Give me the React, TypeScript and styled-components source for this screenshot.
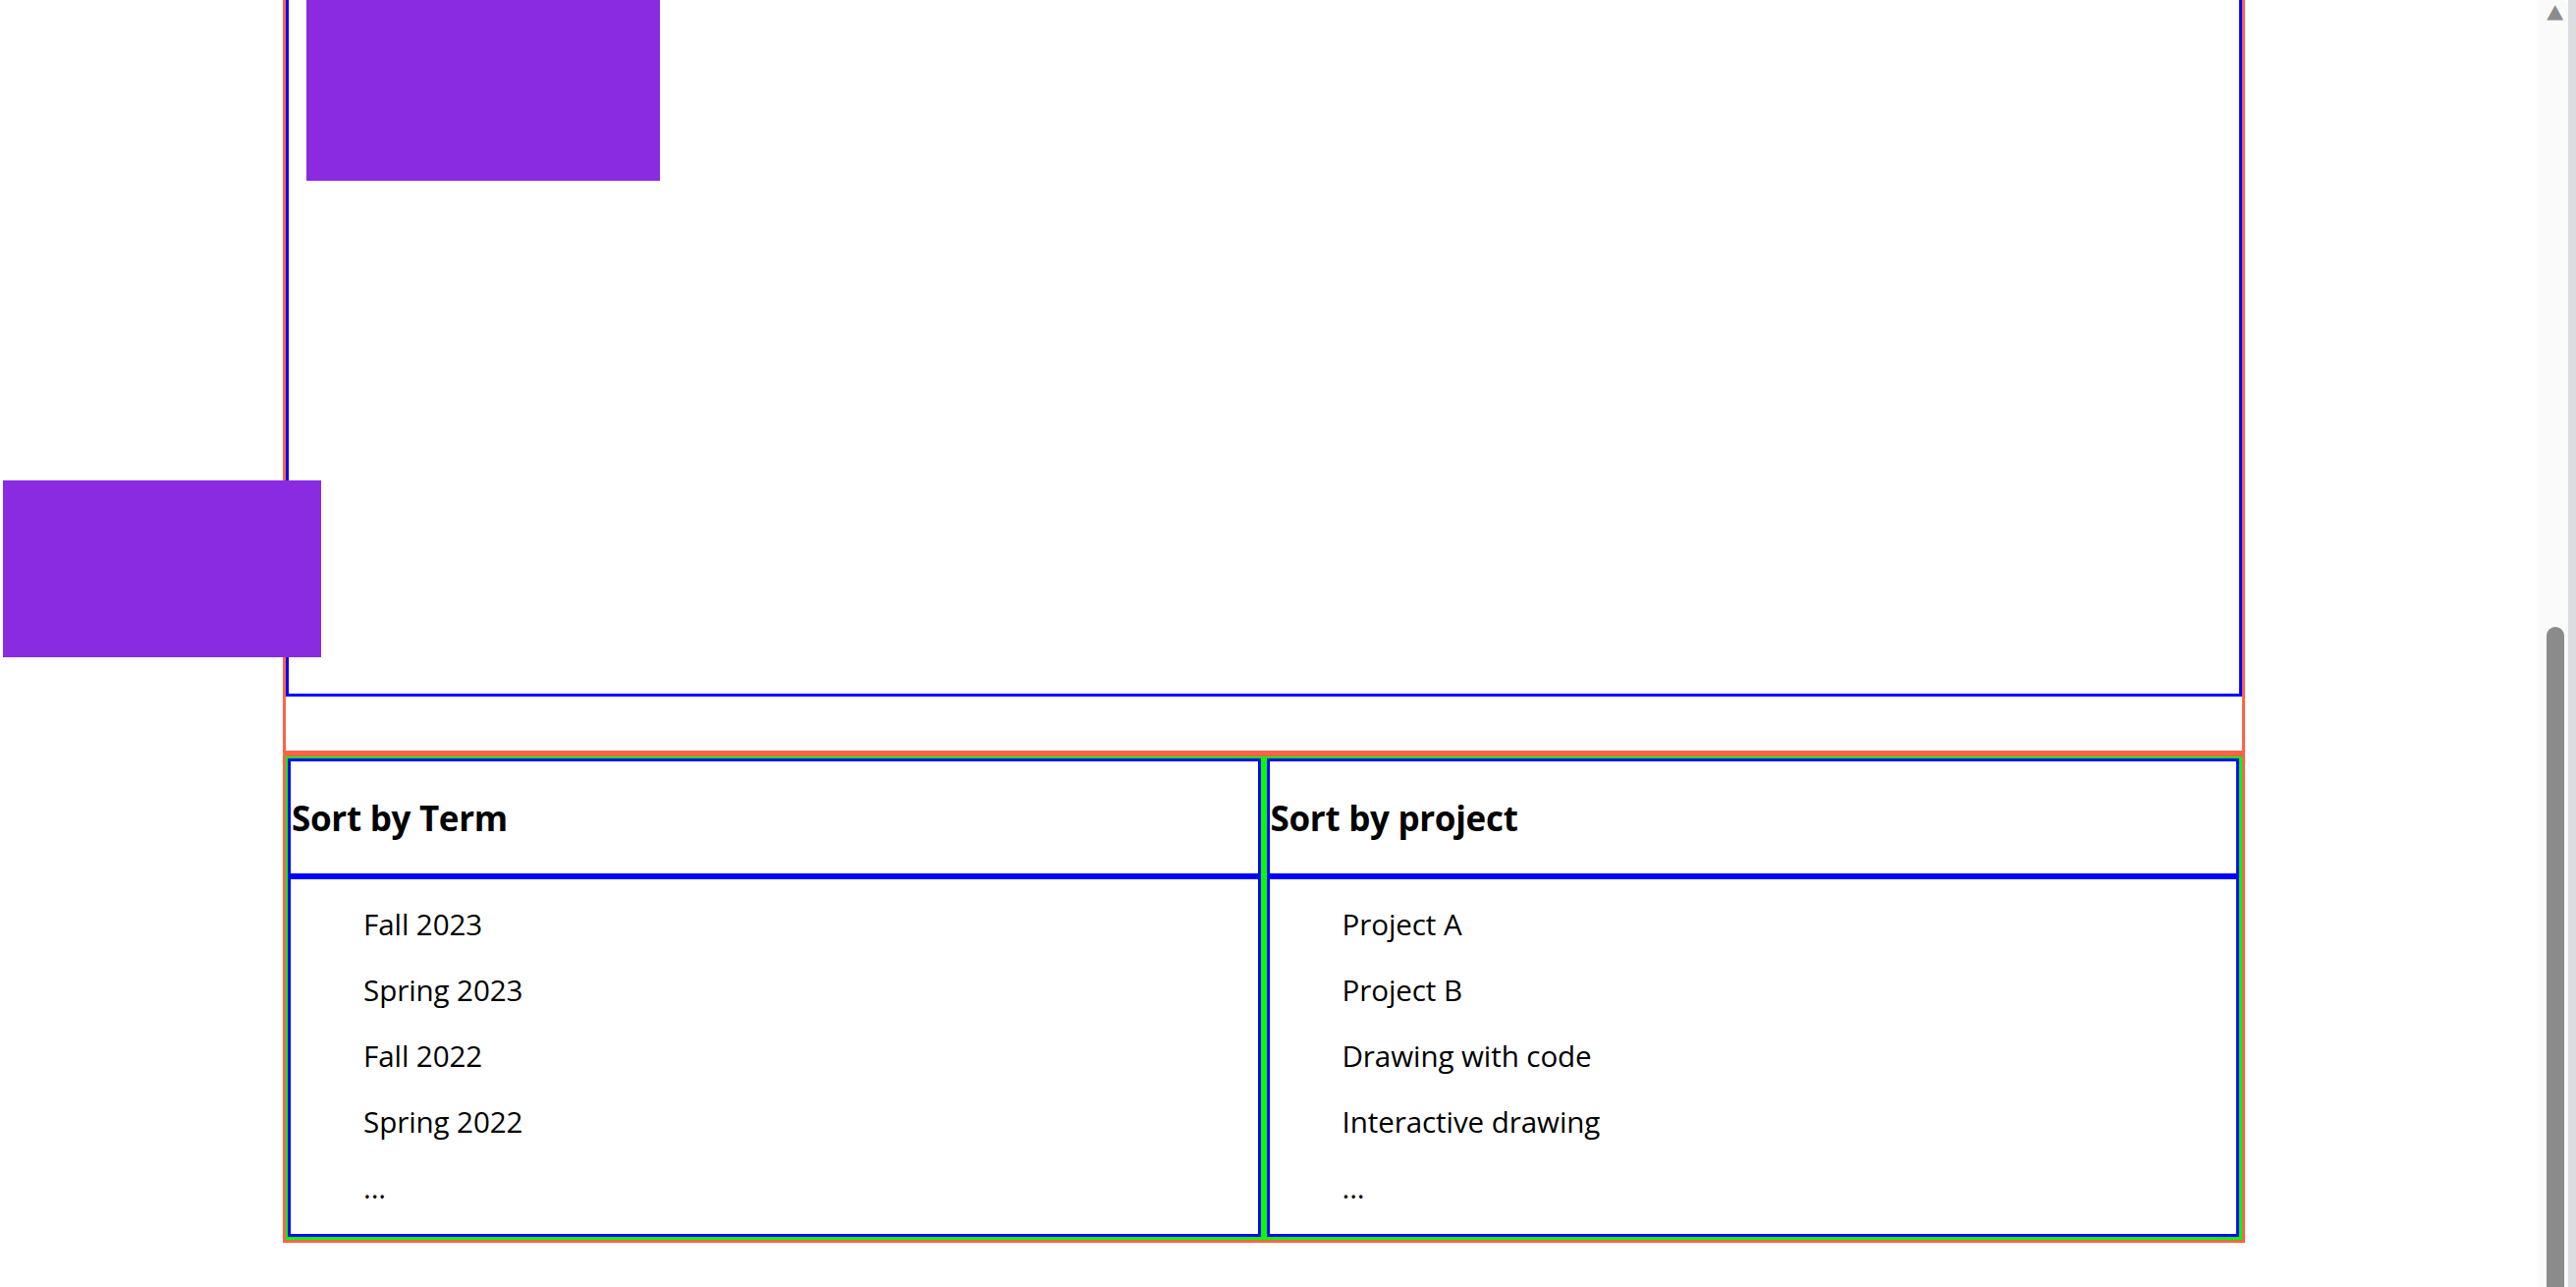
import React from "react";
import styled, { createGlobalStyle } from "styled-components";

const GlobalStyle = createGlobalStyle`
  html, body {
    margin: 0;
    padding: 0;
    height: 100%;
    overflow: hidden;
    background: #ffffff;
  }
  body {
    font-family: "Open Sans", "Noto Sans", "Liberation Sans", sans-serif;
    color: #000000;
  }
  * { box-sizing: border-box; }
`;

const Viewport = styled.div`
  position: relative;
  display: flex;
  width: 100vw;
  height: 100vh;
`;

const Main = styled.main`
  position: relative;
  flex: 1;
  min-width: 0;
  overflow: hidden;
  display: flex;
  flex-direction: column;
  justify-content: flex-end;
  padding-bottom: 45px;
`;

const Page = styled.div`
  flex-shrink: 0;
  width: 1998px;
  margin-left: 288px;
  display: flex;
  flex-direction: column;
`;

const StageFrame = styled.section`
  border: 3px solid tomato;
  padding-bottom: 55px;
`;

const Canvas = styled.div`
  border: 3px solid #0000ff;
  padding: 18px 18px 522px 18px;
`;

const Block = styled.div<{ $w: number; $h: number }>`
  width: ${(p) => p.$w}px;
  height: ${(p) => p.$h}px;
  background: #8a2be2;
`;

const FloatingBlock = styled(Block)`
  position: absolute;
  left: 3px;
  top: 489px;
  z-index: 2;
`;

const Sorter = styled.section`
  border: 3px solid tomato;
  background: #00ff00;
  padding: 2px 3px 3px 2px;
  display: grid;
  grid-template-columns: 1fr 1fr;
  column-gap: 6px;
`;

const Column = styled.div`
  display: flex;
  flex-direction: column;
`;

const ColumnHeader = styled.header`
  height: 120px;
  border: 3px solid #0000ff;
  background: #ffffff;
  display: flex;
  align-items: center;
  padding-left: 1px;
`;

const Heading = styled.h3`
  margin: 0;
  font-size: 35px;
  font-weight: 700;
  line-height: 1;
  letter-spacing: -0.3px;
`;

const ListBox = styled.ul`
  margin: 0;
  height: 367px;
  border: 3px solid #0000ff;
  background: #ffffff;
  list-style: none;
  padding: 12px 0 0 74px;
`;

const Item = styled.li`
  font-size: 29.6px;
  line-height: 67px;
  height: 67px;
  white-space: nowrap;
  letter-spacing: -0.1px;
`;

const Scrollbar = styled.aside`
  position: relative;
  width: 38px;
  height: 100vh;
  flex-shrink: 0;
  display: flex;
  background: #ffffff;
`;

const Track = styled.div`
  width: 30px;
  height: 100%;
  display: flex;
  flex-direction: column;
  justify-content: space-between;
  align-items: center;
  background: #fafafa;
  border-top-right-radius: 8px;
  padding: 4px 0 0 4px;
`;

const Edge = styled.div`
  width: 8px;
  height: 100%;
  background: #dcdde1;
`;

const ArrowGlyph = styled.span`
  display: block;
  font-family: "DejaVu Sans", sans-serif;
  font-size: 20px;
  line-height: 14px;
  height: 14px;
  color: #8b8b8b;
  transform: scaleX(1.1);
`;

const Thumb = styled.div`
  width: 18px;
  height: 672px;
  background: #8b8b8b;
  border-radius: 9px 9px 0 0;
`;

const terms = ["Fall 2023", "Spring 2023", "Fall 2022", "Spring 2022", "..."];
const projects = [
  "Project A",
  "Project B",
  "Drawing with code",
  "Interactive drawing",
  "...",
];

function SortColumn({ title, items }: { title: string; items: string[] }) {
  return (
    <Column>
      <ColumnHeader>
        <Heading>{title}</Heading>
      </ColumnHeader>
      <ListBox>
        {items.map((it, i) => (
          <Item key={i}>{it}</Item>
        ))}
      </ListBox>
    </Column>
  );
}

export default function App() {
  return (
    <>
      <GlobalStyle />
      <Viewport>
        <Main>
          <FloatingBlock $w={324} $h={180} />
          <Page>
            <StageFrame>
              <Canvas>
                <Block $w={360} $h={200} />
              </Canvas>
            </StageFrame>
            <Sorter>
              <SortColumn title="Sort by Term" items={terms} />
              <SortColumn title="Sort by project" items={projects} />
            </Sorter>
          </Page>
        </Main>
        <Scrollbar>
          <Track>
            <ArrowGlyph>▲</ArrowGlyph>
            <Thumb />
          </Track>
          <Edge />
        </Scrollbar>
      </Viewport>
    </>
  );
}
